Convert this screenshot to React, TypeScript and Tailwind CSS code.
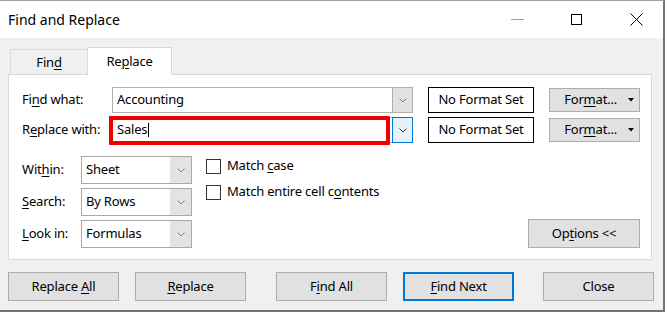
import React from "react";

const U = ({ children }: { children: React.ReactNode }) => (
  <span className="underline underline-offset-[2px] decoration-[1px]">{children}</span>
);

const Chevron = ({ color = "#7a7a7a" }: { color?: string }) => (
  <svg width="8" height="5" viewBox="0 0 8 5">
    <polyline points="0.5,0.5 4,4 7.5,0.5" fill="none" stroke={color} strokeWidth="1" />
  </svg>
);

const Combo = ({
  value,
  active,
  cursor,
}: {
  value: string;
  active?: boolean;
  cursor?: boolean;
}) => (
  <div className="relative w-[301px] h-[26px] flex border border-[#b0b0b0] bg-white">
    <div className="flex-1 flex items-center pl-[4px]">
      <span>{value}</span>
      {cursor && <span className="ml-[1px] w-px h-[14px] bg-black" />}
    </div>
    {active ? (
      <div className="w-[21px] -my-px -mr-px h-[26px] border border-[#0078d7] bg-[#e5f1fb] flex items-center justify-center">
        <Chevron color="#333333" />
      </div>
    ) : (
      <div className="w-[20px] bg-[#e1e1e1] border-l border-[#b0b0b0] flex items-center justify-center">
        <Chevron />
      </div>
    )}
    {cursor && (
      <div className="absolute left-[-4px] top-[-2px] w-[281px] h-[29px] border-[4px] border-[#ee0000] rounded-[1px] pointer-events-none" />
    )}
  </div>
);

const NoFormat = () => (
  <div className="ml-[15px] w-[106px] h-[26px] border border-black bg-white flex items-center justify-center">
    <span>No Format Set</span>
  </div>
);

const FormatBtn = () => (
  <div className="ml-[15px] w-[91px] h-[24px] border border-[#adadad] bg-[#e1e1e1] flex items-center justify-end pr-[5px]">
    <span>
      For<U>m</U>at...
    </span>
    <svg className="ml-[11px]" width="6" height="4" viewBox="0 0 6 4">
      <polygon points="0,0 6,0 3,3.5" fill="#000" />
    </svg>
  </div>
);

const Select = ({ value }: { value: string }) => (
  <div className="w-[111px] h-[28px] border border-[#a9a9a9] bg-white flex">
    <div className="flex-1 flex items-center pl-[4px]">
      <span>{value}</span>
    </div>
    <div className="w-[21px] bg-[#e3e3e3] flex items-center justify-center">
      <Chevron color="#808080" />
    </div>
  </div>
);

const Btn = ({
  children,
  className = "",
  primary,
}: {
  children: React.ReactNode;
  className?: string;
  primary?: boolean;
}) => (
  <div
    className={
      "w-[111px] h-[29px] bg-[#e1e1e1] flex items-center justify-center " +
      (primary ? "border-2 border-[#0078d7] " : "border border-[#adadad] ") +
      className
    }
  >
    <span className="whitespace-pre">{children}</span>
  </div>
);

export default function App() {
  return (
    <div className="w-[668px] h-[312px] bg-white overflow-hidden font-['Noto_Sans',sans-serif] text-black">
      <div className="w-[665px] h-[312px] flex flex-col border-t border-r-2 border-b-2 border-t-[#a0a0a0] border-r-[#737373] border-b-[#737373]">
        {/* Title bar */}
        <div className="h-[37px] bg-white flex items-center shrink-0">
          <span className="pl-[8px] text-[14px]">Find and Replace</span>
          <div className="ml-auto mr-[20px] flex items-center">
            <div className="w-[13px] h-px bg-[#a0a0a0]" />
            <div className="ml-[47px] w-[11px] h-[11px] border border-black" />
            <svg className="ml-[48px]" width="13" height="13" viewBox="0 0 13 13">
              <line x1="0.5" y1="0.5" x2="12.5" y2="12.5" stroke="#000" strokeWidth="1" />
              <line x1="12.5" y1="0.5" x2="0.5" y2="12.5" stroke="#000" strokeWidth="1" />
            </svg>
          </div>
        </div>

        {/* Body */}
        <div className="flex-1 bg-[#f0f0f0] pt-[9px] text-[13px] tracking-[-0.2px]">
          {/* Tabs */}
          <div className="flex items-end pl-[10px]">
            <div className="w-[77px] h-[25px] border-t border-l border-[#d9d9d9] flex items-center justify-center pt-[2px]">
              <span>
                Fin<U>d</U>
              </span>
            </div>
            <div className="relative z-10 w-[85px] h-[28px] -mb-px bg-white border-t border-x border-[#d9d9d9] flex items-center justify-center pt-[1px]">
              <span>
                Re<U>p</U>lace
              </span>
            </div>
          </div>

          {/* Panel */}
          <div className="ml-[8px] w-[644px] h-[186px] bg-white border border-[#d9d9d9] pt-[12px] pl-[13px] pr-[11px] flex flex-col">
            <div className="flex items-center h-[26px]">
              <div className="w-[90px]">
                Fi<U>n</U>d what:
              </div>
              <Combo value="Accounting" />
              <NoFormat />
              <FormatBtn />
            </div>
            <div className="flex items-center h-[26px] mt-[4px]">
              <div className="w-[90px]">
                R<U>e</U>place with:
              </div>
              <Combo value="Sales" active cursor />
              <NoFormat />
              <FormatBtn />
            </div>

            <div className="mt-[13px] flex">
              <div className="flex flex-col gap-[4px]">
                <div className="flex items-center h-[28px]">
                  <div className="w-[59px]">
                    Wit<U>h</U>in:
                  </div>
                  <Select value="Sheet" />
                </div>
                <div className="flex items-center h-[28px]">
                  <div className="w-[59px]">
                    <U>S</U>earch:
                  </div>
                  <Select value="By Rows" />
                </div>
                <div className="flex items-center h-[28px]">
                  <div className="w-[59px]">
                    <U>L</U>ook in:
                  </div>
                  <Select value="Formulas" />
                </div>
              </div>

              <div className="ml-[14px] pt-[1px] flex flex-col gap-[8px]">
                <div className="h-[18px] flex items-center">
                  <div className="w-[15px] h-[15px] border border-[#333333] bg-white" />
                  <span className="ml-[6px]">
                    Match <U>c</U>ase
                  </span>
                </div>
                <div className="h-[18px] flex items-center">
                  <div className="w-[15px] h-[15px] border border-[#333333] bg-white" />
                  <span className="ml-[6px]">
                    Match entire cell c<U>o</U>ntents
                  </span>
                </div>
              </div>

              <div className="ml-auto self-end">
                <div className="w-[112px] h-[29px] bg-[#e1e1e1] border border-[#adadad] flex items-center justify-center">
                  <span>
                    Op<U>t</U>ions &lt;&lt;
                  </span>
                </div>
              </div>
            </div>
          </div>

          {/* Bottom buttons */}
          <div className="mt-[12px] flex pl-[8px]">
            <Btn>
              Replace <U>A</U>ll
            </Btn>
            <Btn className="ml-[16px]">
              <U>R</U>eplace
            </Btn>
            <Btn className="ml-[30px]">
              F<U>i</U>nd All
            </Btn>
            <Btn className="ml-[16px]" primary>
              <U>F</U>ind Next
            </Btn>
            <Btn className="ml-[29px]">Close</Btn>
          </div>
        </div>
      </div>
    </div>
  );
}
